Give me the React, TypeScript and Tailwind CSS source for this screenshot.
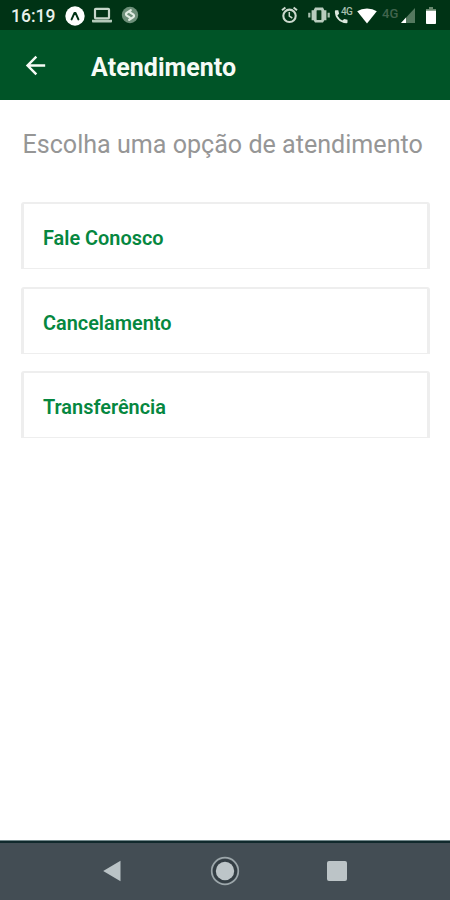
import { MdArrowBack } from "react-icons/md";

const options = ["Fale Conosco", "Cancelamento", "Transferência"];

function StatusBar() {
  return (
    <div className="h-[30px] shrink-0 bg-[#003315] flex items-center text-[#e9f1eb]">
      <span className="ml-[11px] mt-[4px] w-[44px] text-[17.5px] leading-none font-medium whitespace-nowrap">
        16:19
      </span>
      {/* notifications */}
      <svg className="ml-[10px] mt-px" width="20" height="20" viewBox="0 0 20 20">
        <circle cx="10" cy="10" r="9.7" fill="#fff" />
        <path d="M6.6 13.4 9.4 7.1h1.2l2.8 6.3" fill="none" stroke="#003315" strokeWidth="2" strokeLinecap="round" strokeLinejoin="round" />
      </svg>
      <svg className="ml-[7px]" width="20" height="16" viewBox="0 0 20 16">
        <rect x="3" y="1.8" width="14" height="9.6" rx="0.8" fill="none" stroke="#c5d6c9" strokeWidth="2.2" />
        <path d="M0 12.7h20v1.8q0 .9-.8.9H.8q-.8 0-.8-.9z" fill="#b4c9b9" />
      </svg>
      <svg className="ml-[9px]" width="18" height="18" viewBox="0 0 18 18">
        <circle cx="9" cy="9" r="8.2" fill="#6d8f79" />
        <path d="M9.8 4.2 6 6.6q-2 1.5-.2 3.1l2.9 1.7M8.2 13.8l3.8-2.4q2-1.5.2-3.1L9.3 6.6" fill="none" stroke="#e1ece3" strokeWidth="2.2" strokeLinecap="round" />
      </svg>

      {/* system */}
      <div className="ml-auto mr-[14px] flex items-center">
        <svg width="17" height="18" viewBox="0 0 17 18">
          <circle cx="8.5" cy="9.8" r="6.2" fill="none" stroke="#cbd9cd" strokeWidth="2.1" />
          <path d="M1 4.2 4.4 1.4M16 4.2 12.6 1.4" stroke="#cbd9cd" strokeWidth="2" />
          <path d="M8.3 6v4.2l3 1.8" fill="none" stroke="#cbd9cd" strokeWidth="1.5" />
        </svg>
        <svg className="ml-[10px]" width="22" height="18" viewBox="0 0 22 18">
          <path d="M7 1.6h8l1.4 2.6h2v10h-2L15 16.6H7l-1.4-2.4h-2v-10h2z" fill="#b9ccbe" />
          <rect x="8.6" y="4.2" width="4.8" height="9.8" rx="0.6" fill="#08391b" />
          <path d="M1.3 6.8v4.8M20.7 6.8v4.8" stroke="#a9c0af" strokeWidth="2.2" />
        </svg>
        <div className="relative ml-[4px] w-[19px] h-[18px]">
          <svg className="mt-px" width="18" height="18" viewBox="0 0 18 18">
            <path d="M1.7 3.3h2.6l.8 3.5-1.7 1.7q1.8 3.5 5 5.1l1.8-1.7 3.3.8v2.8q-.2.8-1 .8Q7 16 3.8 12.3.7 8.8.9 4.2q0-.9.8-.9z" fill="#dce7de" />
          </svg>
          <span className="absolute left-[7px] top-px text-[10px] leading-none font-medium tracking-[-0.6px] text-[#a8bfae]">4G</span>
        </div>
        <svg className="ml-[4px] mt-px" width="20" height="16" viewBox="0 0 20 16">
          <path d="M10 15.5.2 3.3Q4.3.5 10 .5t9.8 2.8z" fill="#fff" />
        </svg>
        <span className="ml-[5px] w-[18px] -mt-[4px] text-[13px] leading-none font-medium text-[#41644d]">4G</span>
        <svg className="ml-px mt-px" width="14" height="15" viewBox="0 0 14 15">
          <path d="M14 0v15H0z" fill="#54795f" />
          <path d="M5 9.6V15H0z" fill="#fff" />
        </svg>
        <svg className="ml-[11px] mt-px" width="10" height="17" viewBox="0 0 10 17">
          <path d="M3 0h4v2h2.2q.8 0 .8.8v13.4q0 .8-.8.8H.8q-.8 0-.8-.8V2.8Q0 2 .8 2H3z" fill="#fff" />
          <path d="M3 0h4v2h3v1.8H0V2h3z" fill="#69886f" />
        </svg>
      </div>
    </div>
  );
}

function Header() {
  return (
    <header className="h-[70px] shrink-0 bg-[#005427] flex items-center text-[#f6fbf6]">
      <button className="ml-[21px] mt-px" aria-label="Voltar">
        <MdArrowBack size={29} />
      </button>
      <h1 className="ml-[41px] mt-[4px] text-[25px] leading-none font-bold tracking-[0.05px]">Atendimento</h1>
    </header>
  );
}

function OptionCard({ label }: { label: string }) {
  return (
    <button className="h-[67px] px-[19px] pt-[6px] rounded-t-[3px] border-x-[3px] border-t-2 border-b border-[#eeeeee] bg-white flex items-center text-[19.9px] font-semibold text-[#06873f]">
      {label}
    </button>
  );
}

function NavBar() {
  return (
    <nav className="h-[60px] shrink-0 bg-[#434d54] border-t border-[#71878a]">
      <div className="h-full pb-[2px] border-t-2 border-[#10292c] flex items-center justify-center">
        <svg width="18" height="22" viewBox="0 0 18 22">
          <path d="M17.5.8v20.4L.2 11z" fill="#bac3c6" />
        </svg>
        <svg className="ml-[89px]" width="30" height="30" viewBox="0 0 30 30">
          <circle cx="15" cy="15" r="12" fill="#343e44" />
          <circle cx="15" cy="15" r="13.3" fill="none" stroke="#9ca6aa" strokeWidth="1.7" />
          <circle cx="15" cy="15" r="9.2" fill="#bdc5c8" />
        </svg>
        <div className="ml-[87px] size-[20px] rounded-[2px] bg-[#bcc4c7]" />
      </div>
    </nav>
  );
}

export default function App() {
  return (
    <div className="w-full h-screen flex flex-col bg-white font-['Roboto',sans-serif] overflow-hidden">
      <StatusBar />
      <Header />
      <main className="flex-1 pt-[28px]">
        <p className="ml-[22.5px] h-[34px] leading-[34px] text-[25.1px] text-[#969696] whitespace-nowrap">
          Escolha uma opção de atendimento
        </p>
        <div className="mt-[40px] ml-[21px] mr-[20px] flex flex-col gap-[17.5px]">
          {options.map((label) => (
            <OptionCard key={label} label={label} />
          ))}
        </div>
      </main>
      <NavBar />
    </div>
  );
}
